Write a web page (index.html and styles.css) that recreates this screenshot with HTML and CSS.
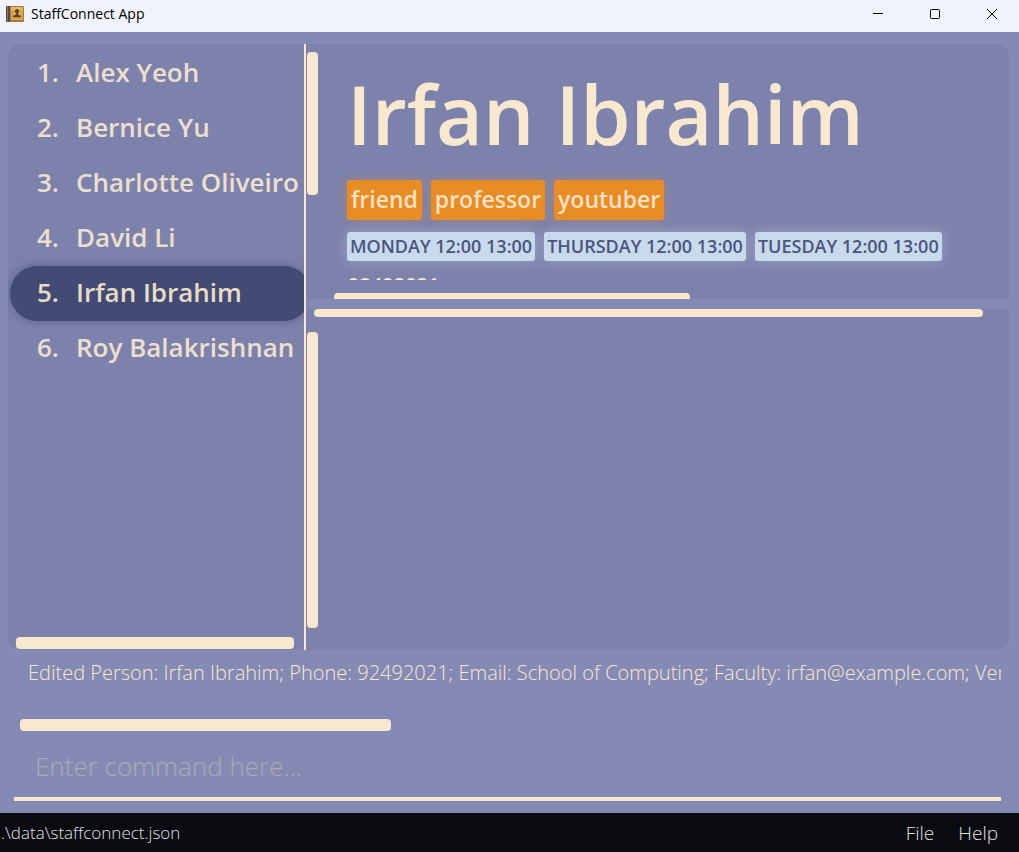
FILE: index.html
```html
<!DOCTYPE html>
<html lang="en">
<head>
<meta charset="utf-8">
<title>StaffConnect App</title>
<link rel="stylesheet" href="styles.css">
</head>
<body>
<header class="titlebar">
  <svg class="app-icon" width="20" height="18" viewBox="0 0 20 18" aria-hidden="true">
    <rect x="1" y="1" width="17" height="16" rx="1" fill="#a87b3c"/>
    <rect x="5" y="2" width="12" height="13" fill="#d9a552"/>
    <rect x="5" y="2" width="12" height="3" fill="#e6b866"/>
    <path d="M0 1h4v16H0z" fill="#5b4c43"/>
    <path d="M1 1h1v16H1z" fill="#82736a"/>
    <path d="M9 6a2 2 0 0 1 4 0c0 1.300-.6 1.800-1 2.500v1.200l3 1v1.500H7v-1.500l3-1V8.500C9.600 7.800 9 7.300 9 6z" fill="#5a4324"/>
  </svg>
  <h1 class="app-title">StaffConnect App</h1>
  <div class="window-buttons">
    <button type="button" aria-label="Minimize"><svg width="10" height="10" viewBox="0 0 10 10"><path d="M0 4.500h10" stroke="#000" fill="none"/></svg></button>
    <button type="button" aria-label="Maximize"><svg width="10" height="10" viewBox="0 0 10 10"><rect x=".5" y=".5" width="9" height="9" rx="1" stroke="#000" fill="none"/></svg></button>
    <button type="button" aria-label="Close"><svg width="10" height="10" viewBox="0 0 10 10"><path d="M0 0l10 10M10 0L0 10" stroke="#000" fill="none"/></svg></button>
  </div>
</header>

<main class="workspace">
  <section class="people">
    <ol class="people-list">
      <li class="person"><span>1.</span><span>Alex Yeoh</span></li>
      <li class="person"><span>2.</span><span>Bernice Yu</span></li>
      <li class="person"><span>3.</span><span>Charlotte Oliveiro</span></li>
      <li class="person"><span>4.</span><span>David Li</span></li>
      <li class="person selected"><span>5.</span><span>Irfan Ibrahim</span></li>
      <li class="person"><span>6.</span><span>Roy Balakrishnan</span></li>
    </ol>
    <div class="thumb people-thumb"></div>
  </section>
  <section class="details">
    <div class="pane card-pane">
      <div class="track"><div class="thumb card-thumb-y"></div></div>
      <div class="card-column">
        <div class="card">
          <h2 class="name">Irfan Ibrahim</h2>
          <div class="tags"><span class="tag">friend</span><span class="tag">professor</span><span class="tag">youtuber</span></div>
          <div class="slots"><span class="slot">MONDAY 12:00 13:00</span><span class="slot">THURSDAY 12:00 13:00</span><span class="slot">TUESDAY 12:00 13:00</span></div>
          <p class="phone">92492021</p>
        </div>
        <div class="thumb card-thumb-x"></div>
      </div>
    </div>
    <div class="pane meeting-pane">
      <div class="thumb meeting-thumb-x"></div>
      <div class="track meeting-track"><div class="thumb meeting-thumb-y"></div></div>
    </div>
  </section>
</main>

<section class="result">
  <p class="message">Edited Person: Irfan Ibrahim; Phone: 92492021; Email: School of Computing; Faculty: irfan@example.com; Venue</p>
  <div class="thumb result-thumb"></div>
</section>

<form class="command">
  <input type="text" aria-label="Command" placeholder="Enter command here...">
</form>

<footer class="statusbar">
  <span class="path">.\data\staffconnect.json</span>
  <nav class="menu"><button type="button">File</button><button type="button">Help</button></nav>
</footer>
</body>
</html>
```
FILE: styles.css
```css
* { box-sizing: border-box; }

body {
  margin: 0;
  height: 100vh;
  display: flex;
  flex-direction: column;
  background: #858ab5;
  color: #f8e8d0;
  font-family: "Open Sans", "Noto Sans", sans-serif;
  overflow: hidden;
}

h1, h2, p, ol { margin: 0; padding: 0; }

button {
  border: 0;
  padding: 0;
  background: none;
  color: inherit;
  font: inherit;
}

.titlebar {
  flex: none;
  display: flex;
  align-items: center;
  height: 32px;
  padding: 0 0 4px 6px;
  background: #f0f3fb;
  color: #000;
}
.app-title {
  margin-left: 5px;
  font-size: 14px;
  line-height: 20px;
  font-weight: 400;
}
.window-buttons { display: flex; gap: 3px; margin-left: auto; }
.window-buttons button {
  display: flex;
  align-items: center;
  justify-content: center;
  width: 54px;
  height: 26px;
}

.workspace {
  flex: 1;
  min-height: 0;
  display: flex;
  margin: 12px 10px 0 8px;
  border-radius: 12px;
  background: #7d82ac;
  overflow: hidden;
}

.thumb { border-radius: 4px; background: #f8e8d0; }

.people {
  flex: 0 0 298px;
  display: flex;
  flex-direction: column;
  justify-content: space-between;
  border-right: 2px solid #f8e8d0;
  padding: 2px 0 1px 2px;
  overflow: hidden;
}
.people-list { list-style: none; }
.person {
  display: flex;
  gap: 17px;
  width: 301px;
  padding: 0 0 2px 27px;
  font-size: 26px;
  line-height: 53px;
  font-weight: 600;
  white-space: nowrap;
  color: #ecdfce;
}
.selected {
  border-radius: 28px;
  background: #424b73;
  color: #e8dcc4;
  box-shadow: 0 0 10px #424b73aa;
}
.people-thumb { height: 12px; margin: 0 10px 0 6px; }

.details {
  flex: 1;
  min-width: 0;
  display: flex;
  flex-direction: column;
  gap: 10px;
  background: #858ab5;
}
.pane { background: #7d82ac; min-height: 0; overflow: hidden; }
.card-pane { flex: 255 0 0; display: flex; }
.track { flex: none; width: 12px; padding: 8px 0 0 1px; }
.card-thumb-y { height: 143px; }
.card-column {
  flex: 1;
  min-width: 0;
  display: flex;
  flex-direction: column;
  padding-left: 16px;
}
.card {
  flex: none;
  height: 236px;
  padding: 12px 13px 0;
  overflow: hidden;
}
.name {
  font-size: 81px;
  line-height: 116px;
  font-weight: 600;
  white-space: nowrap;
}
.tags, .slots { display: flex; gap: 9px; white-space: nowrap; }
.tags { margin-top: 8px; }
.tag {
  padding: 0 4px 2px;
  border-radius: 3px;
  background: #e88c26;
  font-size: 23px;
  line-height: 38px;
  font-weight: 600;
  color: #f8e0c4;
  box-shadow: 0 0 12px #e88c2655;
}
.slots { margin-top: 12px; }
.slot {
  padding: 0 3px;
  border-radius: 3px;
  background: #c8daeb;
  color: #4b5580;
  font-size: 18px;
  line-height: 29px;
  font-weight: 600;
  box-shadow: 0 0 12px #c8daeb66;
}
.phone {
  margin-top: 10px;
  padding-left: 1px;
  font-size: 20px;
  line-height: 28px;
  font-weight: 600;
}
.card-thumb-x { flex: none; width: 356px; height: 12px; margin-top: 13px; }

.meeting-pane { flex: 341 0 0; display: flex; flex-direction: column; }
.meeting-thumb-x { flex: none; height: 8px; margin: 0 26px 0 8px; }
.meeting-track { flex: 1; display: flex; padding: 15px 0 22px 1px; }
.meeting-thumb-y { flex: 1; }

.result { flex: none; padding: 7px 18px 0 20px; }
.message {
  height: 62px;
  padding-left: 8px;
  font-size: 20px;
  line-height: 32px;
  font-weight: 300;
  white-space: nowrap;
  overflow: hidden;
}
.result-thumb { width: 371px; height: 12px; }

.command { flex: none; padding: 14px 18px 12px 14px; }
.command input {
  display: block;
  width: 100%;
  height: 56px;
  border: 0;
  border-bottom: 4px solid #f8e8d0;
  border-radius: 0;
  padding: 0 21px 10px;
  background: none;
  color: #f8e8d0;
  font: 300 26px "Open Sans", "Noto Sans", sans-serif;
  outline: 0;
}
.command input::placeholder { color: #a9aab4; opacity: 1; }

.statusbar {
  flex: none;
  display: flex;
  align-items: center;
  justify-content: space-between;
  height: 39px;
  padding: 0 21px 0 1px;
  background: #090b10;
  color: #e0e0e2;
  font-weight: 300;
}
.path { font-size: 17px; }
.menu { display: flex; gap: 24px; font-size: 19px; }
```
